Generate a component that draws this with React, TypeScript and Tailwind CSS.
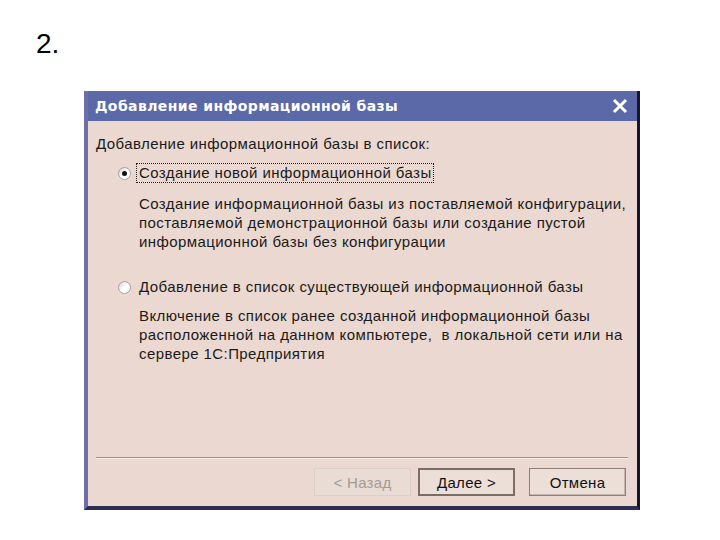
import React from 'react'

const font = { fontFamily: '"Liberation Sans", Arial, sans-serif' }

function Radio({ checked }: { checked?: boolean }) {
  return (
    <span className="flex h-[13px] w-[13px] shrink-0 items-center justify-center rounded-full border border-[#a8a0a0] bg-gradient-to-br from-[#d8d0d0] via-white to-white">
      {checked && <span className="h-[5px] w-[5px] rounded-full bg-[#111]" />}
    </span>
  )
}

function Btn({
  label,
  kind,
}: {
  label: string
  kind: 'disabled' | 'default' | 'normal'
}) {
  const cls =
    kind === 'disabled'
      ? 'border border-[#dccfc8] bg-[#e9dcd5] text-[#a39a94]'
      : kind === 'default'
        ? 'border-2 border-[#7b6c64] bg-[#ebdfd8] text-[#111]'
        : 'border border-[#8e7f78] bg-[#ebdfd8] text-[#111] shadow-[inset_-1px_-1px_0_#c6b8b0]'
  return (
    <div
      className={`flex h-[28px] items-center justify-center text-[15px] tracking-[0.3px] ${cls}`}
      style={{ width: 97 }}
    >
      {label}
    </div>
  )
}

export default function App() {
  return (
    <div className="h-[540px] w-[720px] overflow-hidden bg-white" style={font}>
      <div className="h-[91px] pl-[36px] pt-[27px] text-[28px] leading-[34px] text-black">2.</div>

      <div className="ml-[84px] flex h-[419px] w-[556px] flex-col border-b-[4px] border-l-[4px] border-r-[3px] border-b-[#2b2f55] border-l-[#6e6fa8] border-r-[#15152b]">
        <div className="flex h-[30px] items-center justify-between bg-[#5b69a8] pl-[7px] pr-[9px]">
          <span
            className="text-[14px] font-bold tracking-[0.4px] text-white"
            style={{ fontFamily: '"DejaVu Sans", Verdana, sans-serif' }}
          >
            Добавление информационной базы
          </span>
          <svg width="16" height="16" viewBox="0 0 16 16">
            <path d="M3 3 L13 13 M13 3 L3 13" stroke="#fff" strokeWidth="3" strokeLinecap="square" />
          </svg>
        </div>

        <div className="flex flex-1 flex-col bg-[#ebd9d1] text-[15px] leading-[19px] tracking-[0.42px] text-[#1a1a1a]">
          <div className="flex-1 pl-[8px] pt-[13px]">
            <div>Добавление информационной базы в список:</div>

            <div className="mt-[10px] flex items-center pl-[22px]">
              <Radio checked />
              <span className="ml-[5px] border border-dotted border-[#222] pl-[2px] pr-[1px] leading-[18px]">
                Создание новой информационной базы
              </span>
            </div>
            <div className="mt-[11px] pl-[43px]">
              Создание информационной базы из поставляемой конфигурации,
              <br />
              поставляемой демонстрационной базы или создание пустой
              <br />
              информационной базы без конфигурации
            </div>

            <div className="mt-[26px] flex items-center pl-[22px]">
              <Radio />
              <span className="ml-[5px] border border-transparent pl-[2px] leading-[18px]">
                Добавление в список существующей информационной базы
              </span>
            </div>
            <div className="mt-[9px] pl-[43px]">
              Включение в список ранее созданной информационной базы
              <br />
              расположенной на данном компьютере,&nbsp; в локальной сети или на
              <br />
              сервере 1С:Предприятия
            </div>
          </div>

          <div className="ml-[8px] mr-[9px] border-t border-b border-t-[#a39088] border-b-[#f6ece8]" />

          <div className="flex justify-end pb-[10px] pr-[11px] pt-[9px]">
            <Btn label="< Назад" kind="disabled" />
            <div className="w-[7px]" />
            <Btn label="Далее >" kind="default" />
            <div className="w-[14px]" />
            <Btn label="Отмена" kind="normal" />
          </div>
        </div>
      </div>
    </div>
  )
}
